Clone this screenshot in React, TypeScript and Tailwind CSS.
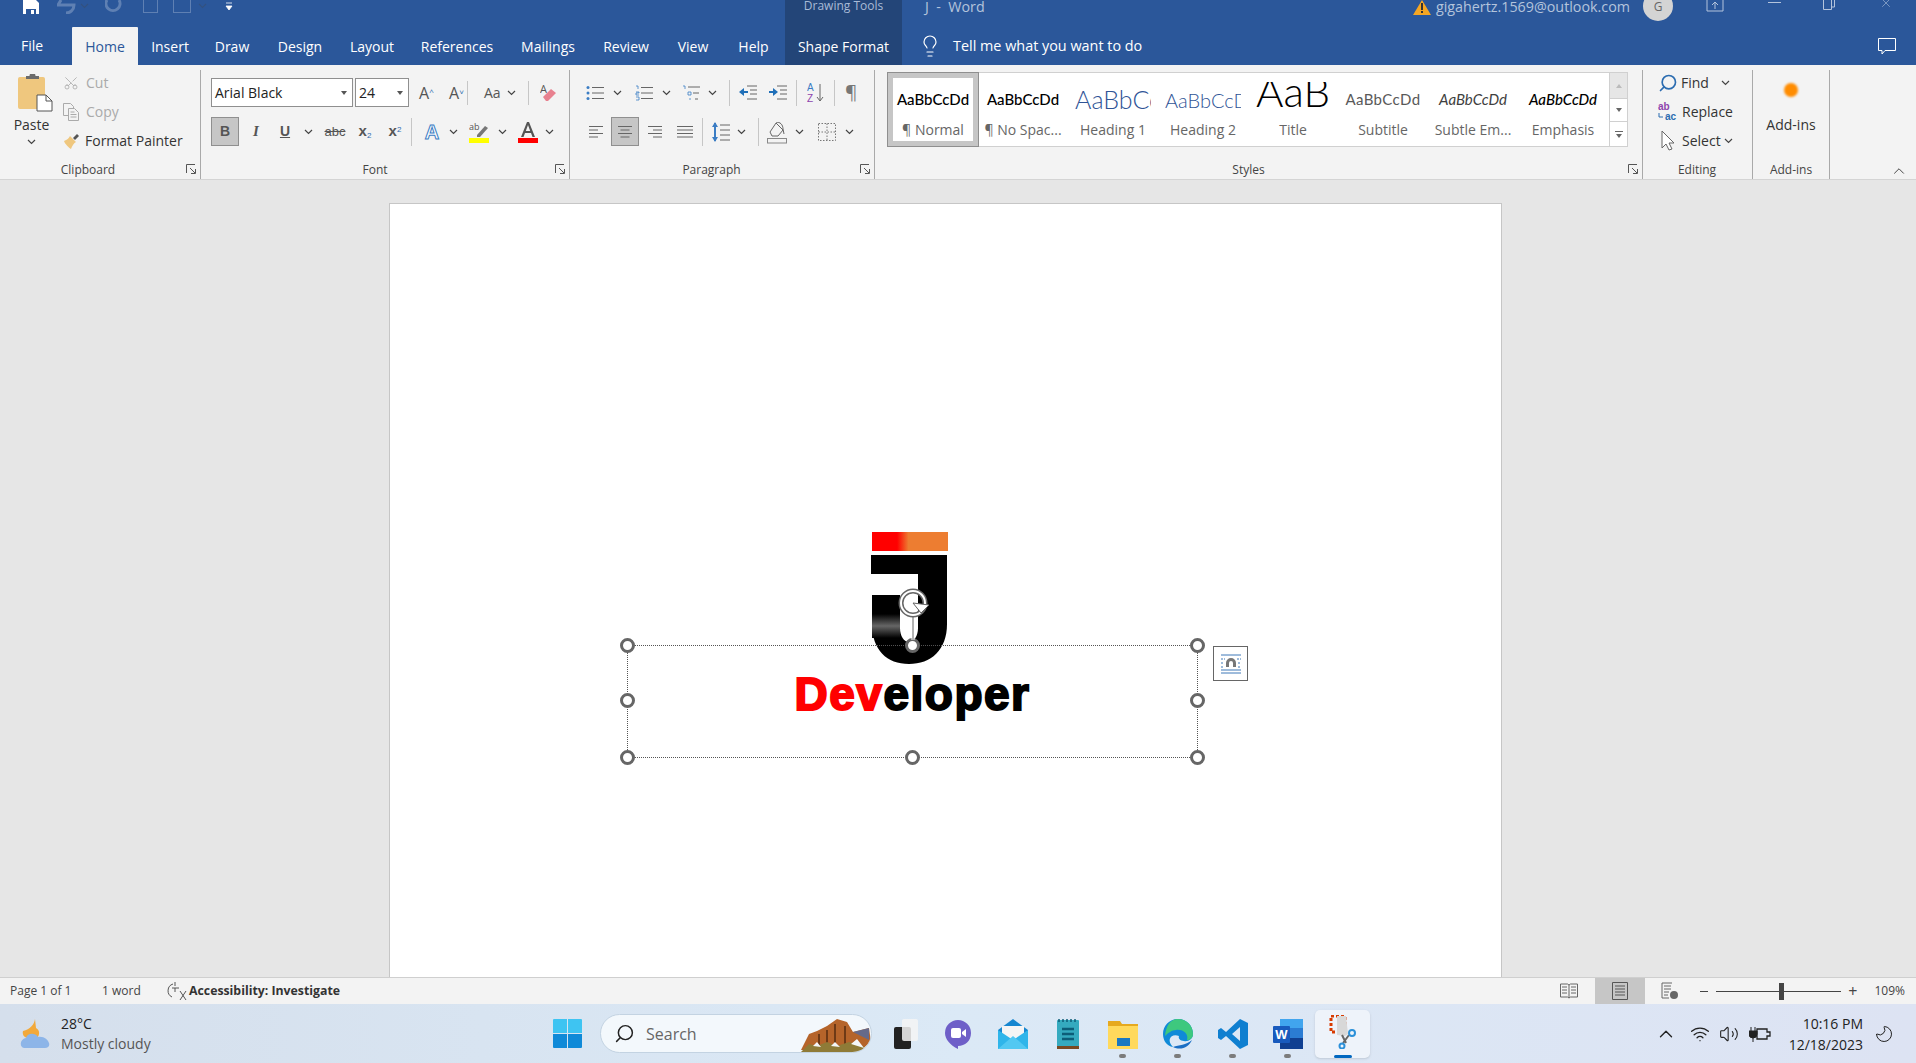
import { ChevronUp, Lightbulb, Moon, Scissors, Search, Volume2, Wifi, X } from 'lucide-react'
import type { ReactNode } from 'react'

const tabs = [
  { label: 'Insert', w: 'w-[64px]' },
  { label: 'Draw', w: 'w-[60px]' },
  { label: 'Design', w: 'w-[76px]' },
  { label: 'Layout', w: 'w-[68px]' },
  { label: 'References', w: 'w-[102px]' },
  { label: 'Mailings', w: 'w-[80px]' },
  { label: 'Review', w: 'w-[76px]' },
  { label: 'View', w: 'w-[58px]' },
  { label: 'Help', w: 'w-[63px]' },
]

const styles = [
  { label: '¶ Normal', preview: 'text-[15px] text-black font-medium', active: true },
  { label: '¶ No Spac...', preview: 'text-[15px] text-black font-medium' },
  { label: 'Heading 1', preview: 'text-[25px] text-[#2f5496] font-light', left: true },
  { label: 'Heading 2', preview: 'text-[20px] text-[#2f5496] font-light', left: true },
  { label: 'Title', preview: 'text-[42px] text-black font-light -translate-y-[9px]', text: 'AaB' },
  { label: 'Subtitle', preview: 'text-[15px] text-[#595959] tracking-[0.4px]' },
  { label: 'Subtle Em...', preview: 'text-[15px] text-[#404040] italic' },
  { label: 'Emphasis', preview: 'text-[15px] text-black italic font-medium' },
]

function Chev({ className = '' }: { className?: string }) {
  return (
    <svg width="9" height="6" viewBox="0 0 9 6" className={className}>
      <path d="M1 1l3.5 3.5L8 1" fill="none" stroke="#444" strokeWidth="1.2" />
    </svg>
  )
}

function Launcher() {
  return (
    <svg width="10" height="10" viewBox="0 0 10 10" className="absolute bottom-[5px] right-[4px]">
      <path d="M.5 9V.5H9M4 4l5 5M5 9.5h4.5V5" fill="none" stroke="#555" strokeWidth="1" />
    </svg>
  )
}

function Group({ label, className, labelClass = '', children }: { label: string; className: string; labelClass?: string; children: ReactNode }) {
  return (
    <div className={`relative flex h-[109px] shrink-0 flex-col border-r border-[#a9a9a9] ${className}`}>
      <div className="min-h-0 flex-1">{children}</div>
      <div className={`h-[20px] text-center text-[12px] leading-[22px] text-[#444] ${labelClass}`}>{label}</div>
      {label !== 'Editing' && label !== 'Add-ins' && <Launcher />}
    </div>
  )
}

function Sep({ className = 'h-[27px]' }: { className?: string }) {
  return <div className={`w-px shrink-0 bg-[#c6c6c6] ${className}`} />
}

function Handle({ className }: { className: string }) {
  return <div className={`absolute h-[15px] w-[15px] rounded-full border-[3px] border-[#666] bg-white ${className}`} />
}

function ClipboardGroup() {
  return (
    <Group label="Clipboard" className="w-[201px]" labelClass="pr-[24px]">
      <div className="flex h-full">
        <div className="flex w-[63px] flex-col items-center pt-[4px]">
          <svg width="36" height="38" viewBox="0 0 36 38" className="ml-[6px]">
            <rect x="1" y="3" width="27" height="32" rx="2" fill="#efc77e" />
            <path d="M9 5V2h3.5a3 3 0 016 0H22v3z" fill="#6b6b6b" />
            <path d="M20 21h9l6 6v10H20z" fill="#fff" stroke="#555" />
            <path d="M29 21v6h6" fill="none" stroke="#555" />
          </svg>
          <span className="mt-[3px] text-[14px] leading-[19px] text-[#333]">Paste</span>
          <Chev className="mt-[5px]" />
        </div>
        <div className="-mt-[2px] flex flex-col text-[14px] leading-[29px]">
          <div className="flex items-center text-[#aaa]">
            <Scissors size={16} strokeWidth={1.2} className="mr-[7px] -rotate-90" />
            Cut
          </div>
          <div className="flex items-center text-[#aaa]">
            <svg width="16" height="18" viewBox="0 0 16 18" className="mr-[7px]">
              <path d="M.5.5h7l3 3V5M.5.5v12H5M5.5 5.5h6l4 4v8h-10zM7.5 9h4M7.5 11.5h6M7.5 14h6" fill="none" stroke="#aaa" />
            </svg>
            Copy
          </div>
          <div className="flex items-center text-[#333]">
            <svg width="18" height="18" viewBox="0 0 18 18" className="mr-[4px]">
              <path d="M1 9c3-1 5-3 6-5l6 6c-2 1-4 4-5 7C6 16 2 12 1 9z" fill="#efc77e" />
              <path d="M10 6l4-4 2 2-4 4z" fill="#555" />
            </svg>
            Format Painter
          </div>
        </div>
      </div>
    </Group>
  )
}

function FontGroup() {
  return (
    <Group label="Font" className="w-[369px] pl-[10px]" labelClass="pr-[30px]">
      <div className="flex h-[37px] items-end">
        <div className="flex h-[29px] w-[142px] items-center justify-between border border-[#8f8f8f] bg-white pl-[3px] pr-[5px] text-[14px] text-[#222]">
          Arial Black
          <span className="h-0 w-0 border-x-[3.5px] border-t-[4px] border-x-transparent border-t-[#555]" />
        </div>
        <div className="ml-[2px] flex h-[29px] w-[54px] items-center justify-between border border-[#8f8f8f] bg-white pl-[3px] pr-[5px] text-[14px] text-[#222]">
          24
          <span className="h-0 w-0 border-x-[3.5px] border-t-[4px] border-x-transparent border-t-[#555]" />
        </div>
        <div className="flex h-[29px] items-center text-[#555]">
          <span className="ml-[10px] w-[30px] text-[16px]">A<sup className="text-[8px] text-[#2b6cb0]">^</sup></span>
          <span className="w-[18px] text-[16px]">A<sup className="text-[8px] text-[#2b6cb0]">˅</sup></span>
          <Sep className="h-[24px]" />
          <span className="ml-[16px] w-[23px] text-[14px]">Aa</span>
          <Chev />
          <Sep className="ml-[12px] h-[24px]" />
          <svg width="18" height="20" viewBox="0 0 18 20" className="ml-[11px]">
            <text x="0" y="10" fontSize="11" fill="#555" fontFamily="Open Sans">A</text>
            <path d="M3 14l8-8 5 4-8 8H6z" fill="#e8818f" />
          </svg>
        </div>
      </div>
      <div className="mt-[10px] flex h-[29px] items-center text-[#555]">
        <div className="flex h-[29px] w-[28px] items-center justify-center border border-[#8f8f8f] bg-[#c6c6c6] font-['Liberation_Sans'] text-[14px] font-bold">B</div>
        <span className="ml-[8px] w-[18px] text-center font-['Liberation_Serif'] text-[15px] font-bold italic">I</span>
        <span className="ml-[11px] w-[18px] text-center font-['Liberation_Sans'] text-[14px] font-bold underline">U</span>
        <Chev className="ml-[10px]" />
        <span className="ml-[6px] w-[32px] text-center font-['Liberation_Sans'] text-[13px] line-through">abc</span>
        <span className="ml-[3px] w-[22px] text-center font-['Liberation_Sans'] text-[15px] font-bold">x<sub className="text-[8px] font-normal text-[#2b6cb0]">2</sub></span>
        <span className="ml-[8px] w-[22px] text-center font-['Liberation_Sans'] text-[15px] font-bold">x<sup className="text-[8px] font-normal text-[#2b6cb0]">2</sup></span>
        <Sep className="ml-[5px] h-[28px]" />
        <span className="ml-[11px] w-[18px] text-center font-['Liberation_Sans'] text-[20px] font-bold text-white [-webkit-text-stroke:1px_#3b7dc4]">A</span>
        <Chev className="ml-[8px]" />
        <svg width="20" height="22" viewBox="0 0 20 22" className="ml-[11px]">
          <text x="0" y="9" fontSize="9" fill="#555" fontFamily="Open Sans">ab</text>
          <path d="M8 14l8-9 3 2-8 9H8z" fill="#777" />
          <rect y="17" width="20" height="5" fill="#ffff00" />
        </svg>
        <Chev className="ml-[9px]" />
        <svg width="20" height="22" viewBox="0 0 20 22" className="ml-[11px]">
          <path d="M3 16L9 1h2l6 15h-2.5l-1.5-4H7l-1.5 4zM7.8 10h4.4L10 4z" fill="#555" />
          <rect y="17" width="20" height="5" fill="#ff0000" />
        </svg>
        <Chev className="ml-[7px]" />
      </div>
    </Group>
  )
}

function ParaGroup() {
  return (
    <Group label="Paragraph" className="w-[305px] pl-[15px]" labelClass="pr-[36px]">
      <div className="flex h-[37px] items-end">
        <div className="flex h-[29px] items-center pl-[1px]">
          <svg width="18" height="16" viewBox="0 0 18 16">
            <path d="M6 2.5h12M6 8h12M6 13.5h12" stroke="#666" />
            <circle cx="2" cy="2.5" r="1.5" fill="#3b7dc4" /><circle cx="2" cy="8" r="1.5" fill="#3b7dc4" /><circle cx="2" cy="13.5" r="1.5" fill="#3b7dc4" />
          </svg>
          <Chev className="ml-[9px]" />
          <svg width="18" height="16" viewBox="0 0 18 16" className="ml-[13px]">
            <path d="M6 2.5h12M6 8h12M6 13.5h12" stroke="#666" />
            <path d="M1 1h2v3M1 7h3v1H1v2h3M1 12h3v3H1" fill="none" stroke="#3b7dc4" strokeWidth=".8" />
          </svg>
          <Chev className="ml-[9px]" />
          <svg width="19" height="16" viewBox="0 0 19 16" className="ml-[11px]">
            <path d="M6 2h12M11 8h6M13 14h3" stroke="#666" />
            <path d="M1 1h2v3M6 7h3v3H6zM8 13v2" fill="none" stroke="#3b7dc4" strokeWidth=".8" />
          </svg>
          <Chev className="ml-[7px]" />
          <Sep className="ml-[12px] h-[26px]" />
          <svg width="18" height="16" viewBox="0 0 18 16" className="ml-[9px]">
            <path d="M8 1h10M11 5h7M11 9h7M8 14h10" stroke="#666" />
            <path d="M0 7l5-4v3h4v2H5v3z" fill="#1f6fb8" />
          </svg>
          <svg width="18" height="16" viewBox="0 0 18 16" className="ml-[12px]">
            <path d="M8 1h10M11 5h7M11 9h7M8 14h10" stroke="#666" />
            <path d="M9 7L4 3v3H0v2h4v3z" fill="#1f6fb8" />
          </svg>
          <Sep className="ml-[9px] h-[26px]" />
          <svg width="18" height="22" viewBox="0 0 18 22" className="ml-[10px]">
            <text x="0" y="9" fontSize="10" fill="#3b7dc4" fontFamily="Liberation Sans">A</text>
            <text x="0" y="20" fontSize="10" fill="#8e44ad" fontFamily="Liberation Sans">Z</text>
            <path d="M13 2v17M10 15l3 4 3-4" fill="none" stroke="#666" />
          </svg>
          <Sep className="ml-[9px] h-[26px]" />
          <span className="ml-[10px] text-[19px] leading-none text-[#777]">¶</span>
        </div>
      </div>
      <div className="mt-[10px] flex h-[29px] items-center">
        <svg width="16" height="14" viewBox="0 0 16 14" className="ml-[3px]"><path d="M1 1.5h14M1 5h9M1 8.5h14M1 12h9" stroke="#666" /></svg>
        <div className="ml-[7px] flex h-[29px] w-[28px] items-center justify-center border border-[#8f8f8f] bg-[#c6c6c6]">
          <svg width="16" height="14" viewBox="0 0 16 14"><path d="M1 1.5h14M3.5 5h9M1 8.5h14M3.5 12h9" stroke="#666" /></svg>
        </div>
        <svg width="16" height="14" viewBox="0 0 16 14" className="ml-[8px]"><path d="M1 1.5h14M6 5h9M1 8.5h14M6 12h9" stroke="#666" /></svg>
        <svg width="16" height="14" viewBox="0 0 16 14" className="ml-[14px]"><path d="M0 1.5h16M0 5h16M0 8.5h16M0 12h16" stroke="#666" /></svg>
        <Sep className="ml-[9px] h-[28px]" />
        <svg width="18" height="22" viewBox="0 0 18 22" className="ml-[9px]">
          <path d="M3 2v18" stroke="#3b7dc4" strokeWidth="2" />
          <path d="M0 6l3-5 3 5zM0 16l3 5 3-5z" fill="#3b7dc4" />
          <path d="M8 4h10M8 9h10M8 14h10M8 19h10" stroke="#666" />
        </svg>
        <Chev className="ml-[7px]" />
        <Sep className="ml-[12px] h-[28px]" />
        <svg width="20" height="24" viewBox="0 0 20 24" className="ml-[8px]">
          <path d="M3 12l6-9 7 7-5 6H5z" fill="none" stroke="#666" />
          <path d="M9 3c4-2 7 2 7 6l1 5" fill="none" stroke="#666" />
          <rect x=".5" y="18.5" width="19" height="4.5" fill="none" stroke="#888" />
        </svg>
        <Chev className="ml-[8px]" />
        <svg width="18" height="18" viewBox="0 0 18 18" className="ml-[14px]">
          <path d="M.5.5h17v17H.5zM9 .5v17M.5 9h17" fill="none" stroke="#777" strokeDasharray="1.5 1.5" />
        </svg>
        <Chev className="ml-[9px]" />
      </div>
    </Group>
  )
}

function StylesGroup() {
  return (
    <Group label="Styles" className="w-[768px] pl-[12px]" labelClass="pr-[32px]">
      <div className="mt-[2px] flex h-[75px] w-[741px] border border-[#d0d0d0] bg-white">
        <div className="flex min-w-0 flex-1">
          {styles.map((s) => (
            <div
              key={s.label}
              className={`flex h-[73px] w-[90px] shrink-0 flex-col items-center ${s.active ? 'border-[5px] border-[#c6c6c6] outline outline-[#8f8f8f]' : 'border-[5px] border-transparent'}`}
            >
              <div className={`mt-[4px] flex h-[35px] w-[76px] items-center overflow-hidden ${s.left ? 'justify-start' : 'justify-center'}`}>
                <span className={`whitespace-nowrap font-['Lato'] leading-none ${s.preview}`}>{s.text ?? 'AaBbCcDd'}</span>
              </div>
              <div className="mt-[3px] whitespace-nowrap text-[14px] leading-[19px] text-[#666]">{s.label}</div>
            </div>
          ))}
        </div>
        <div className="flex w-[18px] shrink-0 flex-col border-l border-[#d0d0d0]">
          <div className="flex h-[25px] items-center justify-center bg-[#e6e6e6]">
            <span className="h-0 w-0 border-x-[3.5px] border-b-[4px] border-x-transparent border-b-[#bbb]" />
          </div>
          <div className="flex h-[24px] items-center justify-center border-y border-[#d0d0d0]">
            <span className="h-0 w-0 border-x-[3.5px] border-t-[4px] border-x-transparent border-t-[#666]" />
          </div>
          <div className="flex flex-1 flex-col items-center justify-center">
            <span className="mb-[2px] h-px w-[8px] bg-[#666]" />
            <span className="h-0 w-0 border-x-[3.5px] border-t-[4px] border-x-transparent border-t-[#666]" />
          </div>
        </div>
      </div>
    </Group>
  )
}

function EditingGroup() {
  return (
    <Group label="Editing" className="w-[110px] pl-[15px]" labelClass="pr-[16px]">
      <div className="-mt-[2px] flex flex-col text-[14px] leading-[29px] text-[#333]">
        <div className="flex items-center">
          <Search size={20} strokeWidth={2} className="mr-[3px] -scale-x-100 text-[#2b6cb0]" />
          Find
          <Chev className="ml-[12px]" />
        </div>
        <div className="flex items-center">
          <svg width="20" height="20" viewBox="0 0 20 20" className="mr-[4px]">
            <text x="0" y="8" fontSize="10" fontWeight="700" fill="#8e44ad" fontFamily="Liberation Sans">ab</text>
            <text x="7" y="18" fontSize="10" fontWeight="700" fill="#2b6cb0" fontFamily="Liberation Sans">ac</text>
            <path d="M1 11v4h4" fill="none" stroke="#2b6cb0" />
          </svg>
          Replace
        </div>
        <div className="flex items-center">
          <svg width="14" height="22" viewBox="0 0 14 22" className="ml-[3px] mr-[7px]">
            <path d="M1 1v17l4-4 3 6 3-1-3-6h5z" fill="#fff" stroke="#666" />
          </svg>
          Select
          <Chev className="ml-[3px]" />
        </div>
      </div>
    </Group>
  )
}

function TitleBar() {
  return (
    <div className="flex h-[27px] shrink-0 bg-[#2b579a] text-[14.3px] text-[#b4c4dc]">
      <div className="flex w-[785px] shrink-0 items-start overflow-hidden pl-[23px]">
        <svg width="16" height="14" viewBox="0 2 16 14">
          <path d="M0 2h13l3 3v11H0z" fill="#fff" />
          <rect x="3" y="11" width="10" height="5" fill="#2b579a" />
          <rect x="8" y="12" width="3" height="4" fill="#fff" />
        </svg>
        <svg width="20" height="14" viewBox="0 0 20 14" className="ml-[18px]">
          <path d="M4 0l-3 5h16c0 5-4 8-8 8" fill="none" stroke="#5f80b3" strokeWidth="3" />
        </svg>
        <Chev className="ml-[3px] mt-[3px] opacity-30" />
        <svg width="18" height="14" viewBox="0 0 18 14" className="ml-[16px]">
          <path d="M2 0a7 7 0 1012 0" fill="none" stroke="#5f80b3" strokeWidth="3" />
        </svg>
        <div className="ml-[20px] h-[13px] w-[15px] border border-t-0 border-[#5f80b3]" />
        <div className="ml-[15px] h-[13px] w-[18px] border border-t-0 border-[#5f80b3]" />
        <Chev className="ml-[7px] mt-[3px] opacity-30" />
        <svg width="8" height="10" viewBox="0 0 8 10" className="ml-[18px] mt-[2px]">
          <path d="M1 1h6M1 4h6L4 8z" fill="#fff" stroke="#fff" strokeWidth=".8" />
        </svg>
      </div>
      <div className="flex w-[117px] shrink-0 justify-center bg-[#234578] text-[12px] leading-[11px] text-[#a9bbd6]">Drawing Tools</div>
      <div className="ml-[23px] whitespace-pre leading-[14px]">J  -  Word</div>
      <div className="ml-auto flex items-start">
        <svg width="18" height="15" viewBox="0 0 18 15" className="mr-[5px]">
          <path d="M9 0l9 15H0z" fill="#f5a623" />
          <path d="M8 3h2v7H8zM8 11h2v2H8z" fill="#333" />
        </svg>
        <span className="leading-[13px]">gigahertz.1569@outlook.com</span>
        <div className="ml-[13px] -mt-[9px] flex h-[30px] w-[30px] items-center justify-center rounded-full bg-[#d4d4d4] pt-[2px] text-[12px] text-[#666]">G</div>
        <svg width="18" height="12" viewBox="0 0 18 12" className="ml-[33px]">
          <path d="M1 0v11h16V0M9 9V3M6 5l3-3 3 3" fill="none" stroke="#b4c4dc" />
        </svg>
        <div className="ml-[44px] mt-[2px] h-px w-[13px] bg-[#b4c4dc]" />
        <svg width="13" height="10" viewBox="0 0 13 10" className="ml-[42px]">
          <path d="M.5 0v9.5h8V0M3 0v-1M8.5 7h3V0" fill="none" stroke="#b4c4dc" />
        </svg>
        <X size={14} strokeWidth={1} className="ml-[43px] mr-[23px] -mt-[4px]" />
      </div>
    </div>
  )
}

function TabRow() {
  return (
    <div className="flex h-[38px] shrink-0 items-stretch bg-[#2b579a] text-[14px] text-white">
      <div className="flex w-[72px] items-center justify-center pb-[2px] pr-[8px]">File</div>
      <div className="flex w-[66px] items-center justify-center rounded-t-[1px] bg-[#f3f3f3] text-[#2b579a]">Home</div>
      {tabs.map((t) => (
        <div key={t.label} className={`flex items-center justify-center ${t.w}`}>{t.label}</div>
      ))}
      <div className="flex w-[117px] items-center justify-center bg-[#234578]">Shape Format</div>
      <Lightbulb size={24} strokeWidth={1.2} className="ml-[16px] self-center" />
      <div className="ml-[11px] flex items-center pb-[1px] text-[14.4px]">Tell me what you want to do</div>
      <svg width="18" height="17" viewBox="0 0 18 17" className="ml-auto mr-[20px] self-center">
        <path d="M.5.5h17v12H7l-3 3.5v-3.5H.5z" fill="none" stroke="#fff" />
      </svg>
    </div>
  )
}

function Ribbon() {
  return (
    <div className="flex h-[115px] shrink-0 border-b border-[#d4d4d4] bg-[#f3f3f3] pt-[5px]">
      <ClipboardGroup />
      <FontGroup />
      <ParaGroup />
      <StylesGroup />
      <EditingGroup />
      <Group label="Add-ins" className="w-[77px]">
        <div className="flex flex-col items-center pt-[13px]">
          <div className="h-[14px] w-[14px] rounded-full bg-[#ff8c00] blur-[1px]" />
          <span className="mt-[18px] text-[14px] leading-[19px] text-[#333]">Add-ins</span>
        </div>
      </Group>
      <ChevronUp size={18} strokeWidth={1.3} className="ml-auto mr-[8px] mt-[92px] text-[#444]" />
    </div>
  )
}

function Shape() {
  return (
    <div className="relative min-h-0 w-[1113px] border-x border-t border-[#c6c6c6] bg-white">
      <svg width="78" height="134" viewBox="0 0 78 134" className="absolute left-[481px] top-[328px]">
        <defs>
          <linearGradient id="bar" x1="0" x2="1" y1="0" y2="0">
            <stop offset="0.33" stopColor="#ff0000" />
            <stop offset="0.48" stopColor="#ed7d31" />
          </linearGradient>
          <linearGradient id="leg" x1="0" x2="0" y1="0" y2="1">
            <stop offset="0" stopColor="#000" />
            <stop offset="0.5" stopColor="#666" />
            <stop offset="1" stopColor="#000" />
          </linearGradient>
        </defs>
        <rect x="1" y="0" width="76" height="19" fill="url(#bar)" />
        <path d="M0 23H76V92C76 118 60 132 38 132C16 132 1 118 1 92V63H29V96C29 104 33 110 38 110C43 110 47 104 47 96V42H0Z" fill="#000" />
        <rect x="1" y="82" width="28" height="24" fill="url(#leg)" />
      </svg>
      <div className="absolute left-[237px] top-[441px] h-[113px] w-[571px] border border-dotted border-[#555]">
        <div className="pt-[20px] text-center font-['Liberation_Sans'] text-[46px] font-bold leading-[56px] tracking-[1.5px] text-black [-webkit-text-stroke:2px_currentColor]">
          <span className="text-[#ff0000]">Dev</span>eloper
        </div>
        <Handle className="-left-[8px] -top-[8px]" />
        <Handle className="left-[277px] -top-[8px]" />
        <Handle className="-right-[8px] -top-[8px]" />
        <Handle className="-left-[8px] top-[47px]" />
        <Handle className="-right-[8px] top-[47px]" />
        <Handle className="-bottom-[8px] -left-[8px]" />
        <Handle className="-bottom-[8px] left-[277px]" />
        <Handle className="-bottom-[8px] -right-[8px]" />
        <svg width="34" height="52" viewBox="0 0 34 52" className="absolute -top-[58px] left-[269px]">
          <path d="M16 28v24" stroke="#fff" strokeWidth="3" />
          <path d="M16 28v24" stroke="#666" strokeWidth="1" />
          <circle cx="16" cy="15" r="12" fill="none" stroke="#666" strokeWidth="5" />
          <circle cx="16" cy="15" r="12" fill="none" stroke="#fff" strokeWidth="2" />
          <path d="M16 15l16 2-8 8z" fill="#fff" stroke="#666" />
        </svg>
        <div className="absolute left-[585px] top-0 flex h-[35px] w-[35px] items-center justify-center border border-[#666] bg-white">
          <svg width="20" height="20" viewBox="0 0 20 20">
            <path d="M0 1h20M0 19h20M0 16h20" stroke="#3f78b8" />
            <path d="M0 5h4M16 5h4M0 9h3M17 9h3M0 13h3M17 13h3" stroke="#3f78b8" strokeDasharray="2 1" />
            <path d="M5 13V9a5 5 0 0110 0v4h-3V9a2 2 0 00-4 0v4z" fill="#777" />
          </svg>
        </div>
      </div>
    </div>
  )
}

function StatusBar() {
  return (
    <div className="flex h-[27px] shrink-0 items-center border-t border-[#cfcfcf] bg-[#f3f3f3] text-[12px] text-[#444]">
      <span className="ml-[10px] w-[92px]">Page 1 of 1</span>
      <span className="w-[64px]">1 word</span>
      <svg width="22" height="20" viewBox="0 0 22 20">
        <path d="M7 3a7 7 0 00-1 13M9 1v4M6 7h7M9 7v4M14 10l6 9M20 10l-6 9" fill="none" stroke="#555" />
      </svg>
      <span className="ml-[1px] text-[12.3px] font-bold text-[#333]">Accessibility: Investigate</span>
      <div className="ml-auto flex h-full items-center">
        <svg width="18" height="16" viewBox="0 0 18 16" className="mr-[17px]">
          <path d="M.5 1h7l1.5 1 1.5-1h7v13h-7L9 15l-1.5-1h-7zM9 2v13M2 4h5M2 7h5M2 10h5M11 4h5M11 7h5M11 10h5" fill="none" stroke="#666" />
        </svg>
        <div className="flex h-full w-[50px] items-center justify-center bg-[#c6c6c6]">
          <svg width="16" height="18" viewBox="0 0 16 18">
            <path d="M.5.5h15v17H.5zM3 4h10M3 7h10M3 10h10M3 13h10" fill="none" stroke="#555" />
          </svg>
        </div>
        <svg width="18" height="18" viewBox="0 0 18 18" className="ml-[16px]">
          <path d="M11 1H1v15h7M3 4h7M3 7h7M3 10h5M3 13h4" fill="none" stroke="#666" />
          <circle cx="13" cy="13" r="4" fill="#666" />
        </svg>
        <div className="ml-[21px] h-px w-[8px] bg-[#444]" />
        <div className="relative ml-[8px] h-px w-[125px] bg-[#444]">
          <div className="absolute -top-[8px] left-[63px] h-[17px] w-[5px] bg-[#444]" />
        </div>
        <span className="ml-[7px] text-[16px] leading-none">+</span>
        <span className="ml-[17px] mr-[11px] text-[12px]">109%</span>
      </div>
    </div>
  )
}

function TaskSlot({ children, dot, active }: { children: ReactNode; dot?: boolean; active?: boolean }) {
  return (
    <div className={`relative flex h-[48px] w-[55px] shrink-0 items-center justify-center ${active ? 'rounded-[5px] bg-[#eef3fa] shadow-sm' : ''}`}>
      {children}
      {dot && <span className="absolute bottom-[0px] h-[4px] w-[7px] rounded-full bg-[#7c7c7c]" />}
      {active && <span className="absolute bottom-[0px] h-[3px] w-[18px] rounded-full bg-[#0067c0]" />}
    </div>
  )
}

function Taskbar() {
  return (
    <div className="flex h-[59px] shrink-0 items-center bg-gradient-to-r from-[#d5dfec] via-[#dbe9f6] to-[#dde3f3] text-[#222]">
      <svg width="34" height="34" viewBox="0 0 34 34" className="ml-[20px]">
        <path d="M15 2c-1 6-5 10-12 12-1 3 1 7 5 7h9c3-3 3-8-1-10z" fill="#f2a93b" />
        <path d="M4 31c-5-1-4-9 2-10 1-5 9-6 12-1 6-1 10 3 11 6 1 3-1 5-4 5z" fill="#8db5e8" />
      </svg>
      <div className="ml-[7px] flex w-[492px] shrink-0 flex-col text-[14px] leading-[20px]">
        <span className="text-[#222]">28°C</span>
        <span className="text-[#555]">Mostly cloudy</span>
      </div>
      <svg width="29" height="29" viewBox="0 0 29 29" className="shrink-0">
        <path d="M0 1a1 1 0 011-1h13v14H0zM15 0h13a1 1 0 011 1v13H15z" fill="#3ec4f2" />
        <path d="M0 15h14v14H1a1 1 0 01-1-1zM15 15h14v13a1 1 0 01-1 1H15z" fill="#0f8ad8" />
      </svg>
      <div className="ml-[18px] flex h-[39px] w-[272px] shrink-0 items-center overflow-hidden rounded-full border border-[#c3d3e2] bg-[#f3f8fc] pl-[13px]">
        <Search size={21} strokeWidth={1.7} className="-scale-x-100 text-[#222]" />
        <span className="ml-[11px] text-[16px] text-[#666]">Search</span>
        <svg width="70" height="36" viewBox="0 0 70 36" className="ml-auto">
          <path d="M0 34L8 18 16 15 26 10 36 3 46 6 52 16 68 12 70 26 60 34z" fill="#b5642a" />
          <path d="M18 18v14M26 14v16M34 8v20M44 10v18" stroke="#6e3a16" strokeWidth="2" />
          <path d="M52 16l16-4v12z" fill="#666a8a" />
          <path d="M0 36l8-8 8 2 10-4 10 4 12-4 14 4 6 6z" fill="#8f7b37" />
          <path d="M12 30l4-4 4 5zM30 30l4-4 5 5zM50 28l6-5 7 9z" fill="#f4f6f8" />
        </svg>
      </div>
      <div className="ml-[22px] flex shrink-0 items-center">
        <svg width="24" height="30" viewBox="0 0 24 30" className="mr-[12px]">
          <rect x="0" y="8" width="17" height="22" rx="2" fill="#222" />
          <rect x="8" y="0" width="16" height="22" rx="2" fill="#f4f4f4" fillOpacity="0.85" />
        </svg>
        <TaskSlot>
          <svg width="30" height="30" viewBox="0 0 30 30">
            <path d="M15 1a13 13 0 0113 13c0 8-6 13-13 13v3C7 26 2 20 2 14A13 13 0 0115 1z" fill="#6e5fc8" />
            <rect x="8" y="9" width="10" height="10" rx="2" fill="#fff" />
            <path d="M19 13l4-3v8l-4-3z" fill="#fff" />
          </svg>
        </TaskSlot>
        <TaskSlot>
          <svg width="30" height="30" viewBox="0 0 30 30">
            <path d="M15 0l15 11v19H0V11z" fill="#1787d0" />
            <path d="M4 7h22v8l-11 7-11-7z" fill="#f5f5f5" />
            <path d="M0 11l15 10 15-10v19H0z" fill="#2fb5ea" />
            <path d="M0 30l15-13 15 13z" fill="#52c8f2" />
          </svg>
        </TaskSlot>
        <TaskSlot>
          <svg width="22" height="30" viewBox="0 0 22 30">
            <rect y="1" width="22" height="29" rx="1" fill="#35aabf" />
            <rect y="27" width="22" height="3" fill="#7a4a23" />
            <path d="M5 10h12M5 15h12M5 20h12" stroke="#0d5d78" strokeWidth="2.5" />
            <path d="M2 0v3M6 0v3M10 0v3M14 0v3M18 0v3" stroke="#0d5d78" strokeWidth="1.5" />
          </svg>
        </TaskSlot>
        <TaskSlot dot>
          <svg width="30" height="30" viewBox="0 0 30 30">
            <path d="M0 2h12l2 3h16v25H0z" fill="#e6a91f" />
            <rect y="7" width="30" height="23" fill="#ffd95c" />
            <rect x="9" y="19" width="13" height="8" fill="#1a78c2" />
          </svg>
        </TaskSlot>
        <TaskSlot dot>
          <svg width="30" height="30" viewBox="0 0 30 30">
            <path d="M15 0c9 0 15 7 15 15 0 5-5 8-9 7-4 0-6-3-5-5-8-3-13 4-6 11C4 27 0 22 0 15 0 7 6 0 15 0z" fill="#0f8ad8" />
            <path d="M15 0c9 0 15 7 15 15 0 4-3 6-6 6 2-6-4-11-11-10-4 0-8 3-11 6C3 7 7 0 15 0z" fill="#3ec87e" />
            <path d="M10 28c8 4 16 0 19-7-6 5-13 5-19 7z" fill="#1a6ec4" />
          </svg>
        </TaskSlot>
        <TaskSlot dot>
          <svg width="30" height="30" viewBox="0 0 30 30">
            <path d="M22 0l8 4v22l-8 4L8 17l-5 4-3-2V11l3-2 5 4zM22 8l-8 7 8 7z" fill="#0f7fd0" />
          </svg>
        </TaskSlot>
        <TaskSlot dot>
          <svg width="30" height="30" viewBox="0 0 30 30">
            <rect x="7" y="0" width="23" height="9" fill="#41a5ee" />
            <rect x="7" y="9" width="23" height="10" fill="#2b7cd3" />
            <rect x="7" y="19" width="23" height="11" fill="#103f91" />
            <rect x="0" y="7" width="17" height="17" rx="1" fill="#185abd" />
            <text x="8.5" y="20" textAnchor="middle" fontSize="13" fontWeight="700" fill="#fff" fontFamily="Liberation Sans">W</text>
          </svg>
        </TaskSlot>
        <TaskSlot active>
          <svg width="30" height="34" viewBox="0 0 30 34" className="mb-[4px]">
            <path d="M3 1h14v16H3z" fill="none" stroke="#d83b01" strokeWidth="3" strokeDasharray="3 2" />
            <path d="M9 1h9l2 18-3 2-8-1z" fill="#d8d8d8" />
            <path d="M14 20l4 8M21 20l-6 8" stroke="#666" strokeWidth="2" />
            <circle cx="24" cy="18" r="3" fill="none" stroke="#2b90d9" strokeWidth="2" />
            <circle cx="14" cy="31" r="2.5" fill="none" stroke="#2b90d9" strokeWidth="2" />
          </svg>
        </TaskSlot>
      </div>
      <div className="ml-auto flex items-center">
        <ChevronUp size={22} strokeWidth={1.5} className="mr-[13px]" />
        <Wifi size={20} strokeWidth={1.6} className="mr-[9px]" />
        <Volume2 size={20} strokeWidth={1.3} className="mr-[10px]" />
        <svg width="22" height="20" viewBox="0 0 22 20" className="mr-[18px]">
          <path d="M8 5h10v3h3v4h-3v3H8z" fill="none" stroke="#222" strokeWidth="1.3" />
          <path d="M2 3v4M6 3v4M0 7h8v3a4 4 0 01-8 0zM4 14v4" fill="#222" stroke="#222" />
        </svg>
        <div className="flex flex-col items-end text-[14px] leading-[21px]">
          <span>10:16 PM</span>
          <span>12/18/2023</span>
        </div>
        <Moon size={20} strokeWidth={1.2} className="ml-[11px] mr-[22px] scale-x-[-1]" />
      </div>
    </div>
  )
}

export default function App() {
  return (
    <div className="flex h-[1063px] w-[1916px] flex-col overflow-hidden font-['Open_Sans',sans-serif]">
      <TitleBar />
      <TabRow />
      <Ribbon />
      <div className="flex min-h-0 flex-1 justify-center overflow-hidden bg-[#e6e6e6] pr-[25px] pt-[23px]">
        <Shape />
      </div>
      <StatusBar />
      <Taskbar />
    </div>
  )
}
